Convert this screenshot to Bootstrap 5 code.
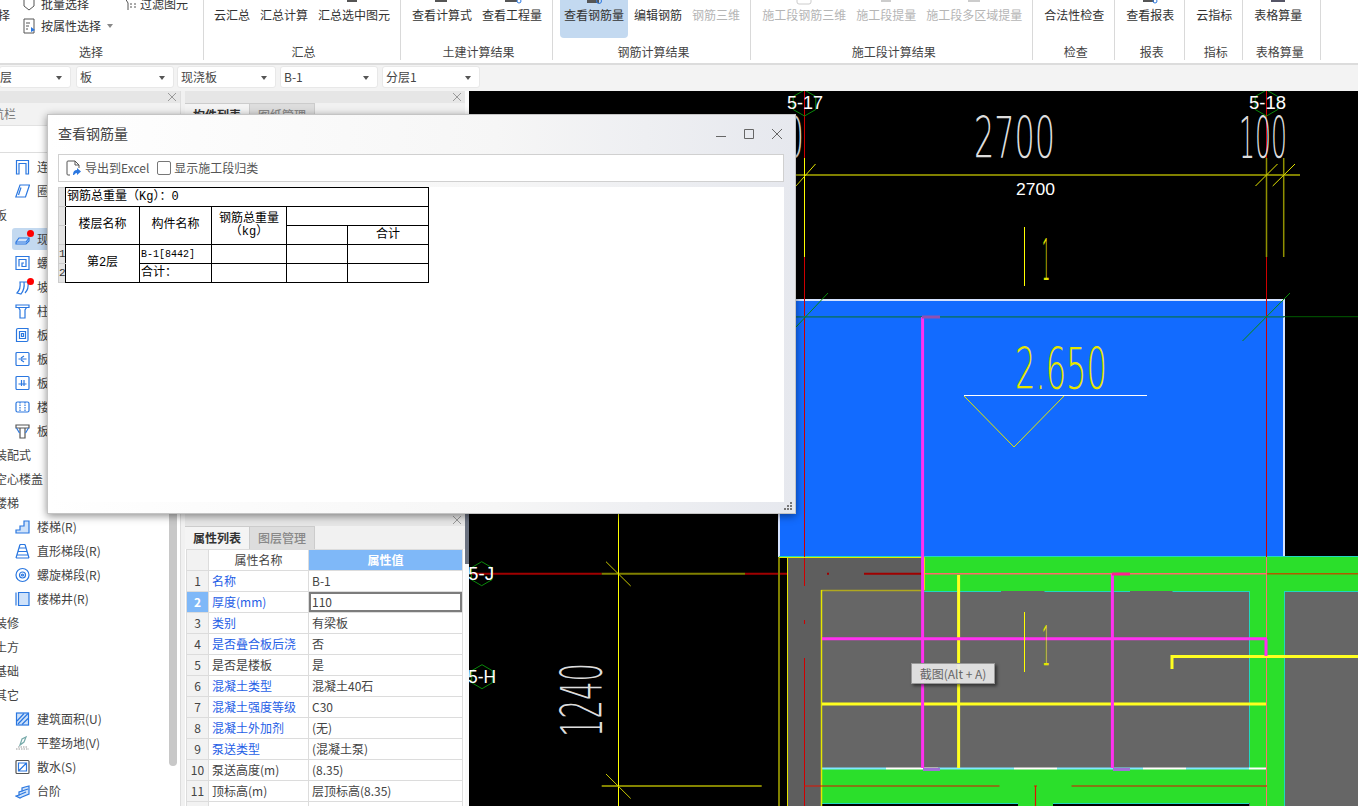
<!DOCTYPE html>
<html lang="zh">
<head>
    <meta charset="UTF-8">
    <title>查看钢筋量</title>
    <link href="https://cdn.jsdelivr.net/npm/bootstrap@5.3.0/dist/css/bootstrap.min.css" rel="stylesheet">
    <style>
        html, body { height: 100%; overflow: hidden; }
        body { background: #f1f1f1; color: #333; font: 12px/16px "Noto Sans CJK SC", "Noto Sans", sans-serif; }
        .shell { position: relative; width: 1358px; height: 806px; overflow: hidden; }

        /* ribbon */
        .ribbon { height: 65px; background: #fff; border-bottom: 2px solid #dcdcdc; overflow: hidden; }
        .rb-group { height: 60px; padding: 0 6px 0 7px; border-right: 1px solid #d9d9d9; display: flex; flex-direction: column; }
        .rb-first { width: 204px; padding: 0; }
        .rb-second { padding-left: 6px; }
        .rb-last { padding-right: 14px; }
        .rb-row { display: flex; gap: 2px; height: 38px; }
        .rb-btn { padding: 0 4px; white-space: nowrap; text-align: center; color: #333; border-radius: 0 0 4px 4px; }
        .rb-btn svg { display: block; margin: 0 auto; width: 20px; height: 7px; }
        .rb-btn.active { background: #c3d9f0; }
        .rb-btn.off { color: #b5b5b5; }
        .rb-label { margin-top: 6px; padding-left: 3px; text-align: center; color: #444; }
        .pick-col { margin-top: -7px; }
        .pick-item { height: 22px; display: flex; align-items: center; gap: 4px; white-space: nowrap; }
        .pick-caret { width: 0; height: 0; border: 3px solid transparent; border-top: 4px solid #888; margin: 3px 0 0 2px; }

        /* combo row */
        .combo-bar { height: 26px; padding-top: 1px; gap: 4px; background: #f3f3f3; }
        .combo { height: 22px; padding: 0 3px; background: #fff; border: 1px solid #e8e8e8; border-radius: 3px; display: flex; align-items: center; justify-content: space-between; color: #444; }
        .combo::after { content: ""; border: 3px solid transparent; border-top: 4px solid #555; margin: 4px 5px 0 0; }
        .cb-a { width: 72px; margin: 0 1px 0 -1px; text-indent: -3px; }
        .cb-b { width: 98px; margin-right: -1px; }
        .cb-c { width: 99px; }
        .cb-d { width: 98px; }

        /* panels */
        .work { height: 715px; }
        .side-panel { position: relative; width: 181px; flex: none; background: #fff; border-right: 1px solid #ddd; overflow: hidden; }
        .mid-panel { width: 280px; flex: none; margin-left: 4px; display: flex; flex-direction: column; }
        .strip { height: 12px; flex: none; background: #e6e6e6; position: relative; }
        .strip-x { position: absolute; right: 3px; top: 0; width: 10px; height: 12px; stroke: #999; }
        .nav-head { height: 23px; margin-left: -8px; background: #f2f2f2; border-bottom: 1px solid #e2e2e2; line-height: 22px; color: #777; }
        .nav-search { height: 27px; border-bottom: 1px solid #ddd; }
        .tree { margin: 2px 0 0 -5px; }
        .tree-row { position: relative; height: 24px; display: flex; align-items: center; white-space: nowrap; color: #444; }
        .tree-item { padding-left: 20px; gap: 7px; }
        .tree-item svg { width: 15px; height: 16px; flex: none; fill: none; stroke: #2a77e0; stroke-width: 1.2; }
        .tree-item.sel::before { content: ""; position: absolute; left: 17px; top: 1px; width: 160px; height: 22px; border-radius: 3px; background: #c3d9f0; }
        .tree-item > * { position: relative; }
        .red-dot { position: absolute; left: 32px; top: 3px; width: 7px; height: 7px; border-radius: 50%; background: #f00; }
        .side-scroll { position: absolute; left: 169px; top: 64px; width: 8px; height: 611px; border-radius: 0 0 4px 4px; background: #c8c8c8; }

        .tabs-top { height: 423px; background: #fff; }
        .pane-tabs { display: flex; height: 23px; background: #f1f1f1; }
        .pane-tab { width: 65px; text-align: center; line-height: 22px; background: #ddd; color: #888; border: 1px solid #ccc; border-left: 0; border-bottom: 0; font-weight: 500; }
        .pane-tab.on { background: #f4f4f4; color: #333; font-weight: 700; }
        .prop-wrap { flex: 1; background: #fff; overflow: hidden; padding-left: 1px; }
        .prop-table { width: 277px; table-layout: fixed; margin: 0; border-color: #dcdcdc; font-size: 12px; line-height: 14px; }
        .prop-table td, .prop-table th { height: 21px; padding: 0 3px; vertical-align: middle; font-weight: 400; color: #444; border: 1px solid #dcdcdc; white-space: nowrap; }
        .prop-table .num { background: #f2f2f2; text-align: center; padding: 0; font-size: 12px; }
        .prop-table .num.cur { background: #7fb8f8; color: #fff; font-weight: 700; }
        .prop-table .blue { color: #1f60e6; }
        .prop-table th.head-val { background: #7fb8f8; color: #fff; font-weight: 700; text-align: center; }
        .prop-table th.head-name { text-align: center; }
        .prop-table td.edit { box-shadow: inset 0 0 0 2px #7c7c7c; }
        .col-num { width: 22px; }
        .col-name { width: 100px; }

        .rail { width: 4px; flex: none; display: flex; flex-direction: column; background: #fafafa; }
        .rail-gap { height: 423px; }
        .rail-thumb { height: 50px; background: #6b7280; }

        .canvas { width: 889px; height: 715px; background: #000; flex: none; display: block; }
        .canvas path { fill: none; }
        .cad-big { font-family: "DejaVu Sans", Roboto, sans-serif; font-weight: 200; }
        .cad-txt { font-family: "Liberation Sans", sans-serif; fill: #fff; }

        /* floating window */
        .float-win { position: absolute; left: 47px; top: 114px; width: 749px; height: 400px; display: flex; flex-direction: column; background: linear-gradient(to right, #fff 0, #f6f6f6 60%, #e6e8ee 100%); border: 1px solid #c4c4c4; box-shadow: 0 2px 8px rgba(0,0,0,.45); }
        .win-title { height: 39px; flex: none; padding: 0 12px 4px 10px; display: flex; align-items: center; justify-content: space-between; font-size: 14px; color: #444; }
        .win-ctrls { margin-top: 2px; }
        .win-ctrls svg { width: 12px; height: 12px; margin-left: 16px; stroke: #666; fill: none; display: inline-block; }
        .win-tools { height: 28px; flex: none; margin: 0 11px 0 10px; padding-left: 6px; background: #fff; border: 1px solid #d0d0d0; display: flex; align-items: center; color: #555; }
        .win-tools .form-check-input { width: 14px; height: 14px; margin: 0 3px 0 8px; border-color: #777; border-radius: 2px; float: none; }
        .win-body { flex: 1; margin: 5px 11px 11px 10px; background: #fff; position: relative; }
        .grip { position: absolute; right: 2px; bottom: 2px; width: 9px; height: 9px; fill: #777; }
        .rebar-table { width: 371px; table-layout: fixed; border-collapse: collapse; color: #000; font-family: "Liberation Mono", "Noto Sans CJK SC", monospace; font-size: 12px; line-height: 13px; }
        .rebar-table td { height: 19px; padding: 0; border: 1px solid #000; text-align: center; overflow: hidden; white-space: nowrap; }
        .rebar-table td.rh { width: 7px; background: #e4e4e4; border: 1px solid #ccc; border-right-color: #000; text-align: left; color: #333; font-size: 11px; }
        .rebar-table td.lft { text-align: left; padding-left: 1px; }
        .rebar-table td.tiny { font-size: 10px; }
        .rb-c1 { width: 7px; } .rb-c2 { width: 74px; } .rb-c3 { width: 72px; } .rb-c4 { width: 75px; } .rb-c5 { width: 61px; } .rb-c6 { width: 81px; }

        .shot-tip { position: absolute; left: 911px; top: 663px; width: 84px; height: 21px; background: rgba(232,232,232,.92); border: 1px solid #999; box-shadow: 2px 2px 3px rgba(0,0,0,.5); text-align: center; line-height: 19px; color: #666; }
    </style>
</head>
<body>

<div class="shell">
    <div class="ribbon d-flex">
        <div class="rb-group rb-first">
            <div class="rb-row" style="gap:0">
                <div class="pt-2 flex-none" style="width:24px;margin-left:-2px;margin-top:-1px">择</div>
                <div class="pick-col" style="width:102px">
                    <div class="pick-item"><svg width="15" height="16" viewBox="0 0 15 16" fill="none" stroke="#555"><path d="M2 1v9l5 4 5-4V1"/></svg>批量选择</div>
                    <div class="pick-item"><svg width="15" height="16" viewBox="0 0 15 16" fill="none" stroke="#555"><path d="M2 1h10v14H2z"/><path d="M4 5h4M4 8h3M4 11h2" /><path d="M9 9l4 3-4 2z" fill="#2a77e0" stroke="none"/></svg>按属性选择<span class="pick-caret"></span></div>
                </div>
                <div class="pick-col">
                    <div class="pick-item"><svg width="12" height="16" viewBox="0 0 12 16" fill="none" stroke="#555"><path d="M1 2l3 5v7M10 8h2M10 11h2M6 8h2M6 11h2"/></svg>过滤图元</div>
                </div>
            </div>
            <div class="rb-label" style="margin-left:-24px">选择</div>
        </div>
        <div class="rb-group rb-second">
            <div class="rb-row">
                <div class="rb-btn"><svg></svg>云汇总</div>
                <div class="rb-btn"><svg></svg>汇总计算</div>
                <div class="rb-btn"><svg viewBox="0 0 20 7"><rect x="3" y="0" width="10" height="2" fill="#555"/></svg>汇总选中图元</div>
            </div>
            <div class="rb-label">汇总</div>
        </div>
        <div class="rb-group">
            <div class="rb-row">
                <div class="rb-btn"><svg viewBox="0 0 20 7"><rect x="3" y="0" width="12" height="2" fill="#555"/></svg>查看计算式</div>
                <div class="rb-btn"><svg viewBox="0 0 20 7"><rect x="3" y="0" width="12" height="2" fill="#555"/><circle cx="17" cy="1" r="2" fill="none" stroke="#2a77e0"/></svg>查看工程量</div>
            </div>
            <div class="rb-label">土建计算结果</div>
        </div>
        <div class="rb-group">
            <div class="rb-row">
                <div class="rb-btn active"><svg viewBox="0 0 20 7"><rect x="3" y="0" width="12" height="3" fill="#555"/><circle cx="15" cy="1" r="2.5" fill="none" stroke="#2a77e0"/></svg>查看钢筋量</div>
                <div class="rb-btn"><svg></svg>编辑钢筋</div>
                <div class="rb-btn off"><svg></svg>钢筋三维</div>
            </div>
            <div class="rb-label">钢筋计算结果</div>
        </div>
        <div class="rb-group">
            <div class="rb-row">
                <div class="rb-btn off"><svg viewBox="0 0 20 7"><path d="M3 0v2q0 2 2 2h10q2 0 2-2V0" fill="none" stroke="#ccc"/></svg>施工段钢筋三维</div>
                <div class="rb-btn off"><svg viewBox="0 0 20 7"><rect x="5" y="0" width="10" height="2" fill="#ccc"/></svg>施工段提量</div>
                <div class="rb-btn off"><svg viewBox="0 0 20 7"><rect x="4" y="0" width="12" height="2" fill="#ccc"/></svg>施工段多区域提量</div>
            </div>
            <div class="rb-label">施工段计算结果</div>
        </div>
        <div class="rb-group">
            <div class="rb-row"><div class="rb-btn"><svg></svg>合法性检查</div></div>
            <div class="rb-label">检查</div>
        </div>
        <div class="rb-group">
            <div class="rb-row"><div class="rb-btn"><svg viewBox="0 0 20 7"><rect x="3" y="0" width="11" height="2" fill="#555"/><circle cx="15" cy="1" r="2" fill="none" stroke="#2a77e0"/></svg>查看报表</div></div>
            <div class="rb-label">报表</div>
        </div>
        <div class="rb-group">
            <div class="rb-row"><div class="rb-btn"><svg></svg>云指标</div></div>
            <div class="rb-label">指标</div>
        </div>
        <div class="rb-group rb-last">
            <div class="rb-row"><div class="rb-btn"><svg viewBox="0 0 20 7"><rect x="3" y="0" width="14" height="2" fill="#556"/></svg>表格算量</div></div>
            <div class="rb-label">表格算量</div>
        </div>
    </div>

    <div class="combo-bar d-flex">
        <div class="combo cb-a"><span>层</span></div>
        <div class="combo cb-b"><span>板</span></div>
        <div class="combo cb-c"><span>现浇板</span></div>
        <div class="combo cb-d"><span>B-1</span></div>
        <div class="combo cb-d"><span>分层1</span></div>
    </div>

    <div class="work d-flex">
        <div class="side-panel">
            <div class="strip"><svg class="strip-x" viewBox="0 0 10 12"><path d="M1 2l8 8M9 2l-8 8"/></svg></div>
            <div class="nav-head">航栏</div>
            <div class="nav-search"></div>
            <div class="tree" id="navTree"></div>
            <div class="side-scroll"></div>
        </div>

        <div class="mid-panel">
            <div class="tabs-top">
                <div class="strip"><svg class="strip-x" viewBox="0 0 10 12"><path d="M1 2l8 8M9 2l-8 8"/></svg></div>
                <div class="pane-tabs">
                    <div class="pane-tab on">构件列表</div>
                    <div class="pane-tab">图纸管理</div>
                </div>
            </div>
            <div class="strip"><svg class="strip-x" viewBox="0 0 10 12"><path d="M1 2l8 8M9 2l-8 8"/></svg></div>
            <div class="pane-tabs">
                <div class="pane-tab on">属性列表</div>
                <div class="pane-tab">图层管理</div>
            </div>
            <div class="prop-wrap">
                <table class="table prop-table">
                    <colgroup><col class="col-num"><col class="col-name"><col></colgroup>
                    <thead><tr><th class="num"></th><th class="head-name">属性名称</th><th class="head-val">属性值</th></tr></thead>
                    <tbody id="propRows"></tbody>
                </table>
            </div>
        </div>
        <div class="rail"><div class="rail-gap"></div><div class="rail-thumb"></div></div>

        <svg class="canvas" viewBox="469 91 889 715" xmlns="http://www.w3.org/2000/svg">
            <!-- slab and beams -->
            <rect x="779" y="300" width="505" height="257" fill="#126bff" stroke="#d5e3ff" stroke-width="2"/>
            <rect x="787" y="557" width="463" height="249" fill="#666"/>
            <rect x="787" y="557" width="137" height="34" fill="#5e5e5e"/>
            <rect x="787" y="591" width="34" height="215" fill="#5e5e5e"/>
            <rect x="924" y="557" width="434" height="34" fill="#2bdf2b"/>
            <rect x="1250" y="557" width="34" height="249" fill="#2bdf2b"/>
            <rect x="822" y="769" width="428" height="34" fill="#2bdf2b"/>
            <rect x="1018" y="803" width="35" height="3" fill="#2bdf2b"/>
            <rect x="1284.5" y="591" width="74" height="215" fill="#666"/>
            <rect x="822" y="803.5" width="196" height="3" fill="#000"/>
            <rect x="1053" y="803.5" width="196" height="3" fill="#000"/>
            <path d="M822 803.5H1018M1053 803.5H1249M924 591.5H1001M1044.5 591.5H1130M1172.5 591.5H1249M1249.5 591V768M1284.5 591V806M1284.5 591.5H1358M779 556.500H1358" stroke="#20d8c0"/>
            <path d="M822 768.500H886M938 768.500H1014M1057 768.500H1143M1186 768.500H1249" stroke="#7fe8ff" stroke-width="2"/>
            <path d="M886 768.500H938M1014 768.500H1057M1143 768.500H1186M1249 768.500H1266" stroke="#fff" stroke-width="2"/>

            <!-- axis lines -->
            <path d="M796 175H1300" stroke="#808000" stroke-width="2"/>
            <path d="M804.500 91V158M1266.500 91V158" stroke="#d00000"/>
            <path d="M804.500 158V257" stroke="#ffff00"/>
            <path d="M1266.500 158V257M1283.700 158V257" stroke="#909000" stroke-width="1.500"/>
            <path d="M804.500 257V586M804.500 620V624M804.500 658V806" stroke="#d00000"/>
            <path d="M1266.500 257V806" stroke="#d00000"/>
            <path d="M1266.500 557V806" stroke="#ff7070"/>
            <path d="M796 186L815.500 164M1255.500 186L1277.500 164M1272.700 186L1295 164" stroke="#e6e600"/>
            <path d="M796 316.700H1358" stroke="#005c00"/>
            <path d="M796 316.700H1284" stroke="#0a7080" stroke-width="1.500"/>
            <path d="M796 327L828 293M1242.500 341L1290 293" stroke="#0a8a0a"/>
            <path d="M470 573.700H601.700M745 573.700H788M827 573.700H829M864 573.700H924" stroke="#a00000" stroke-width="2"/>
            <path d="M601.700 573.700H745" stroke="#808000" stroke-width="2"/>
            <path d="M924 573.700H1266" stroke="#ff6a6a" stroke-width="1.500"/>
            <path d="M1267 573.700H1358" stroke="#b05a00" stroke-width="1.500"/>
            <path d="M601.700 786H761.700" stroke="#b0b000" stroke-width="1.500"/>
            <path d="M618.500 514V806" stroke="#ffff00"/>
            <path d="M606 561.700L630.700 586M606 774L630.700 798.500" stroke="#c8c800"/>
            <path d="M779 557V806" stroke="#808000" stroke-width="2"/>
            <path d="M787.500 557V806M779 557.500H924.500V590" stroke="#e6e600"/>
            <path d="M821 590.500H924.500" stroke="#b0a820" stroke-width="1.500"/>
            <path d="M821.500 590V806" stroke="#e6e600" stroke-width="1.500"/>
            <path d="M804.500 786H999.500M1071.500 786H1267M1034 786H1037M1035.500 786V806" stroke="#e01000" stroke-width="1.200"/>

            <!-- rebar -->
            <path d="M958.600 575V768M822 704H1266" stroke="#ffff20" stroke-width="3"/>
            <path d="M1172 669V656.500H1358" stroke="#ffff20" stroke-width="3"/>
            <path d="M922.600 317V768M1112.400 574V768M822 638.700H1267M1266 639V656" stroke="#ff30f0" stroke-width="3"/>
            <path d="M922 317H940" stroke="#9050b0" stroke-width="3"/>
            <path d="M1112 574H1130" stroke="#ff2090" stroke-width="3"/>
            <path d="M923 769.500H940M1113 769.500H1130" stroke="#a070d8" stroke-width="3"/>

            <!-- section marks and elevation -->
            <path d="M1024.500 227V286M1024.500 612V672" stroke="#ffff00"/>
            <path d="M964 395.500H1147" stroke="#fff"/>
            <path d="M964 396L1014 447L1064 396" stroke="#e6e600"/>
            <text x="1042" y="280" class="cad-big" font-size="57" fill="#e6e600" textLength="8" lengthAdjust="spacingAndGlyphs">1</text>
            <text x="1042" y="665" class="cad-big" font-size="55" fill="#e6e600" textLength="8" lengthAdjust="spacingAndGlyphs">1</text>
            <text x="1015" y="389" class="cad-big" font-size="57" fill="#e6e600" textLength="92" lengthAdjust="spacingAndGlyphs">2.650</text>
            <text x="974" y="158" class="cad-big" font-size="57" fill="#ddd" textLength="81" lengthAdjust="spacingAndGlyphs">2700</text>
            <text x="1239" y="158" class="cad-big" font-size="57" fill="#ddd" textLength="48" lengthAdjust="spacingAndGlyphs">100</text>
            <text x="784" y="158" class="cad-big" font-size="57" fill="#ddd" textLength="20" lengthAdjust="spacingAndGlyphs">0</text>
            <text transform="translate(601.700 737) rotate(-90)" class="cad-big" font-size="57" fill="#ddd" textLength="74" lengthAdjust="spacingAndGlyphs">1240</text>
            <text x="1016" y="195" class="cad-txt" font-size="17" textLength="39" lengthAdjust="spacingAndGlyphs">2700</text>

            <!-- axis bubbles -->
            <g fill="none" stroke="#0a8a0a">
                <polygon points="804.500,90 815.800,96.500 815.800,109.500 804.500,116 793.200,109.500 793.200,96.500"/>
                <polygon points="1266.500,90 1277.800,96.500 1277.800,109.500 1266.500,116 1255.200,109.500 1255.200,96.500"/>
                <polygon points="481.700,561.700 492,567.700 492,579.700 481.700,585.700 471.400,579.700 471.400,567.700"/>
                <polygon points="482,664.700 492.300,670.700 492.300,682.700 482,688.700 471.700,682.700 471.700,670.700"/>
            </g>
            <text x="787" y="109" class="cad-txt" font-size="18" textLength="36" lengthAdjust="spacingAndGlyphs">5-17</text>
            <text x="1249" y="109" class="cad-txt" font-size="18" textLength="37" lengthAdjust="spacingAndGlyphs">5-18</text>
            <text x="468" y="580" class="cad-txt" font-size="18" textLength="26" lengthAdjust="spacingAndGlyphs">5-J</text>
            <text x="468" y="683" class="cad-txt" font-size="18" textLength="28" lengthAdjust="spacingAndGlyphs">5-H</text>
        </svg>
    </div>

    <div class="shot-tip">截图(Alt + A)</div>

    <div class="float-win">
        <div class="win-title">
            <span>查看钢筋量</span>
            <span class="win-ctrls d-flex">
                <svg viewBox="0 0 12 12"><path d="M1 8.500h10"/></svg>
                <svg viewBox="0 0 12 12"><path d="M1.500 1.500h9v9h-9z"/></svg>
                <svg viewBox="0 0 12 12"><path d="M1 1l10 10M11 1L1 11"/></svg>
            </span>
        </div>
        <div class="win-tools">
            <svg width="16" height="16" viewBox="0 0 16 16" fill="none" stroke="#555" class="me-1 flex-none"><path d="M5 15H3q-1 0-1-1V2q0-1 1-1h7l4 4v3"/><path d="M10 1v4h4"/><path d="M8 15q0-5 4-5V8l4 3.500-4 3.500v-2q-2 0-3 2z" fill="#2a77e0" stroke="none"/></svg>
            <span>导出到Excel</span>
            <input class="form-check-input" type="checkbox">
            <span>显示施工段归类</span>
        </div>
        <div class="win-body">
            <table class="rebar-table">
                <colgroup><col class="rb-c1"><col class="rb-c2"><col class="rb-c3"><col class="rb-c4"><col class="rb-c5"><col class="rb-c6"></colgroup>
                <tr><td class="rh"></td><td colspan="5" class="lft">钢筋总重量（Kg）：0</td></tr>
                <tr><td class="rh"></td><td rowspan="2">楼层名称</td><td rowspan="2">构件名称</td><td rowspan="2">钢筋总重量<br>（kg）</td><td colspan="2"></td></tr>
                <tr><td class="rh"></td><td></td><td>合计</td></tr>
                <tr><td class="rh">1</td><td rowspan="2">第2层</td><td class="lft tiny">B-1[8442]</td><td></td><td></td><td></td></tr>
                <tr><td class="rh">2</td><td class="lft">合计：</td><td></td><td></td><td></td></tr>
            </table>
        </div>
        <svg class="grip" viewBox="0 0 9 9"><rect x="6" y="0" width="2" height="2"/><rect x="3" y="3" width="2" height="2"/><rect x="6" y="3" width="2" height="2"/><rect x="0" y="6" width="2" height="2"/><rect x="3" y="6" width="2" height="2"/><rect x="6" y="6" width="2" height="2"/></svg>
    </div>
</div>

<script src="https://cdn.jsdelivr.net/npm/bootstrap@5.3.0/dist/js/bootstrap.bundle.min.js"></script>
<script>
    // icon bodies for the nav tree, all on a 15x16 box
    const icons = {
        gate: '<path d="M1.500 15V1.500h12V15H11V4.500H4V15z"/>',
        ring: '<path d="M5 2h9.500L10.500 14H.8z"/><path d="M6 4.500L3.500 12" />',
        slab: '<path d="M1 11l3-4h10v3l-3 3H1z" fill="#cfe2fa"/><path d="M1 11h10l3-4"/>',
        spiral: '<path d="M1 1.500h13v13H1z"/><path d="M4 11.500v-7h7v7H7V8h2"/>',
        ramp: '<path d="M2 14q4-4 3-11h4q1 7-3 12zM9 3h4q1 7-3 11"/>',
        cap: '<path d="M1 2h13v2.500H1zM3.500 4.500L5 7v8h5V7l1.500-2.500"/>',
        hole: '<path d="M1.500 3q0-1.500 1.500-1.500h10V13q0 1.500-1.500 1.500h-10z"/><path d="M4.500 4.500h6v7h-6z"/><path d="M6.500 6.500h2v3h-2z"/>',
        box1: '<rect x="1" y="1.500" width="13" height="13" rx="1"/><path d="M3.500 8h8M9 5L6 7M9 11L6 9"/>',
        box2: '<rect x="1" y="1.500" width="13" height="13" rx="1"/><path d="M3.500 9h8M6.500 5v6M9 5v6"/>',
        band: '<rect x="1" y="3" width="13" height="10" rx="1.500"/><path d="M5 3v10M10 3v10" stroke-dasharray="1.500 1"/>',
        tee: '<path d="M1 2h13v3H1z" stroke="#555"/><path d="M5 5v10h5V5" stroke="#555"/><path d="M1.500 5l3 5M13.500 5l-3 5"/>',
        stair: '<path d="M1 14v-3h4V7h4V2h5v12z" fill="#cfe2fa"/>',
        flight: '<path d="M5 1.500h5M4 5h7M3 8.500h9M2 12h11M1 15h13M5 1.500L1 15M10 1.500L14 15"/>',
        helix: '<circle cx="7.500" cy="8" r="6.500"/><circle cx="7.500" cy="8" r="3"/><circle cx="7.500" cy="8" r="1"/>',
        well: '<path d="M1 1.500v13M3.500 1.500h10.500v13H3.500z" fill="#cfe2fa"/>',
        area: '<rect x="1.500" y="2" width="12" height="12" fill="#cfe2fa"/><path d="M2 10l7-7.500M3 13l10-10.500M7 13.500l6-6"/>',
        level: '<path d="M1 14h13M3 12h9" stroke="#999" stroke-dasharray="1.500 1"/><path d="M5 10l2-6 4-2-2 5z" stroke="#7aa"/>',
        apron: '<rect x="1" y="1.500" width="13" height="13" rx="1" stroke="#555"/><path d="M3.500 4h8v8h-8zM3.500 12l8-8"/>',
        step: '<path d="M1 13l3-1V9l3-1V5l3-1 4-1v8l-7 3-2 1z" fill="#cfe2fa"/><path d="M4 12l7-3M7 8l6-2"/>'
    };

    const treeRows = [
        ["连梁(G)", "gate"], ["圈梁(E)", "ring"], ["板"],
        ["现浇板(B)", "slab", "sel dot"], ["螺旋板(B)", "spiral"], ["坡屋面(B)", "ramp", "dot"],
        ["柱帽(V)", "cap"], ["板洞(N)", "hole"], ["板受力筋(S)", "box1"], ["板负筋(F)", "box2"],
        ["楼层板带(H)", "band"], ["板加腋(I)", "tee"],
        ["装配式"], ["空心楼盖"], ["楼梯"],
        ["楼梯(R)", "stair"], ["直形梯段(R)", "flight"], ["螺旋梯段(R)", "helix"], ["楼梯井(R)", "well"],
        ["装修"], ["土方"], ["基础"], ["其它"],
        ["建筑面积(U)", "area"], ["平整场地(V)", "level"], ["散水(S)", "apron"], ["台阶", "step"]
    ];

    let navTree = document.getElementById("navTree");
    treeRows.forEach(([name, icon, flags = ""]) => {
        if (!icon) {
            navTree.innerHTML += `<div class="tree-row">${name}</div>`;
            return;
        }
        let sel = flags.includes("sel") ? " sel" : "";
        let dot = flags.includes("dot") ? '<span class="red-dot"></span>' : "";
        navTree.innerHTML += `<div class="tree-row tree-item${sel}"><svg viewBox="0 0 15 16">${icons[icon]}</svg>${dot}<span>${name}</span></div>`;
    });

    const props = [
        ["名称", "B-1", 1], ["厚度(mm)", "110", 1], ["类别", "有梁板", 1], ["是否叠合板后浇", "否", 1],
        ["是否是楼板", "是", 0], ["混凝土类型", "混凝土40石", 1], ["混凝土强度等级", "C30", 1],
        ["混凝土外加剂", "(无)", 1], ["泵送类型", "(混凝土泵)", 1], ["泵送高度(m)", "(8.35)", 0],
        ["顶标高(m)", "层顶标高(8.35)", 0], ["", "", 0]
    ];

    document.getElementById("propRows").innerHTML = props.map((p, i) => `<tr>
        <td class="num${i === 1 ? " cur" : ""}">${i + 1}</td>
        <td${p[2] ? ' class="blue"' : ""}>${p[0]}</td>
        <td${i === 1 ? ' class="edit"' : ""}>${p[1]}</td>
    </tr>`).join("");
</script>

</body>
</html>
